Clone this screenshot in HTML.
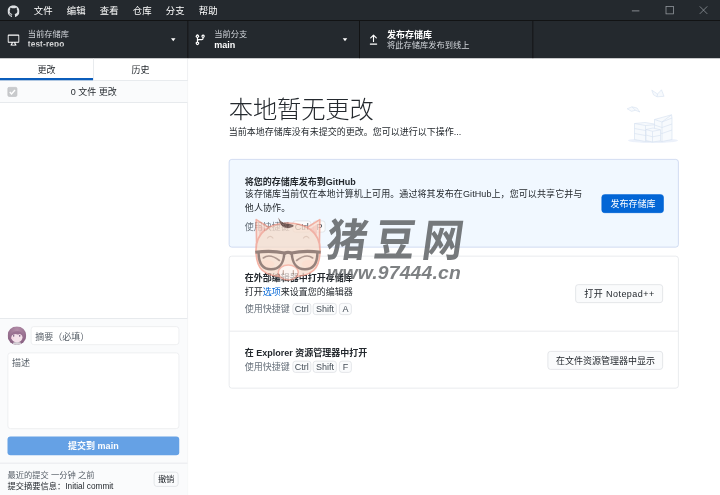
<!DOCTYPE html>
<html lang="zh-CN">
<head>
<meta charset="utf-8">
<title>GitHub Desktop</title>
<style>
html,body{margin:0;padding:0;width:720px;height:495px;overflow:hidden;background:#fff;}
*{box-sizing:border-box;}
#app{position:absolute;left:0;top:0;width:960px;height:660px;transform:scale(0.75);transform-origin:0 0;
  font-family:"Liberation Sans","Noto Sans CJK SC",sans-serif;font-size:12px;color:#24292e;background:#fff;overflow:hidden;}
/* title bar */
#titlebar{position:absolute;left:0;top:0;width:960px;height:28px;background:#24292e;border-bottom:1px solid #0c0c0c;color:#fff;}
#titlebar .logo{position:absolute;left:9.7px;top:6.6px;width:16px;height:16px;}
#titlebar .menu{position:absolute;top:0;height:27px;line-height:29px;font-size:12.5px;color:#fff;white-space:nowrap;}
#titlebar .wc{position:absolute;top:0;width:45px;height:27px;}
/* toolbar */
#toolbar{position:absolute;left:0;top:28px;width:960px;height:50px;background:#24292e;color:#fff;}
.tbtn{position:absolute;top:0;height:50px;border-right:1px solid #0c0c0c;}
.tbtn .ico{position:absolute;left:10px;top:17px;width:16px;height:16px;}
.tbtn .desc{position:absolute;left:36px;top:10px;font-size:11px;line-height:14px;color:#d1d5da;white-space:nowrap;}
.tbtn .ttl{position:absolute;left:36px;top:24px;font-size:12px;line-height:16px;font-weight:bold;color:#fff;white-space:nowrap;}
.tbtn .caret{position:absolute;right:16px;top:22.5px;width:0;height:0;border-left:3.8px solid transparent;border-right:3.8px solid transparent;border-top:4.3px solid #fff;}
/* sidebar */
#sidebar{position:absolute;left:0;top:78px;width:251px;height:582px;background:#fff;border-right:1px solid #e1e4e8;}
.tabs{position:absolute;left:0;top:0;width:250px;height:30px;border-bottom:1px solid #e1e4e8;}
.tab{position:absolute;top:0;height:29px;line-height:30px;text-align:center;font-size:12px;color:#24292e;}
.tab.sel{border-bottom:3px solid #0b5dbb;}
.chdr{position:absolute;left:0;top:30px;width:250px;height:29px;border-bottom:1px solid #e1e4e8;background:#fafbfc;}
.chdr .cb{position:absolute;left:10px;top:8px;width:13px;height:13px;border-radius:2px;background:#c9cbcd;border:1px solid #c0c2c4;}
.chdr .lbl{position:absolute;left:0;width:250px;top:0;line-height:28px;text-align:center;color:#24292e;}
/* commit form */
#commit{position:absolute;left:0;top:346px;width:250px;height:236px;border-top:1px solid #e1e4e8;background:#fafbfc;}

/* main */
#main{position:absolute;left:251px;top:78px;width:709px;height:582px;background:#fff;}
#main h1{position:absolute;left:54px;top:46.5px;margin:0;font-size:32.4px;line-height:42px;font-weight:300;font-family:"Liberation Sans","Noto Sans CJK SC",sans-serif;color:#24292e;white-space:nowrap;letter-spacing:-0.2px;}
#main .sub{position:absolute;left:54px;top:89.7px;font-size:12px;line-height:16px;color:#24292e;white-space:nowrap;}
.box{position:absolute;left:54.4px;width:600px;border:1px solid #e1e4e8;border-radius:4px;background:#fff;}
.box.primary{background:#f1f8ff;border-color:#c4d2ec;}
.box h2{position:absolute;margin:0;left:20px;font-size:12px;line-height:16px;font-weight:bold;color:#24292e;white-space:nowrap;}
.box .d{position:absolute;left:20px;font-size:12px;line-height:18px;color:#24292e;white-space:nowrap;}
.box .k{position:absolute;left:20px;font-size:12px;line-height:16px;color:#6a737d;white-space:nowrap;}
kbd{display:inline-block;font-family:inherit;font-size:12px;line-height:14px;height:16px;padding:0;text-align:center;margin-right:2.7px;border:1px solid #dcdfe3;border-radius:4px;background:#fafbfc;color:#444d56;vertical-align:baseline;}
.btn{position:absolute;height:25px;line-height:25.6px;border:1px solid #dcdfe3;border-radius:4px;background:#fafbfc;color:#24292e;font-size:12px;text-align:center;white-space:nowrap;}
.btn.blue{background:#0366d6;border-color:#0366d6;color:#fff;}
a.l{color:#0366d6;text-decoration:none;}

#commit .avatar{position:absolute;left:9.6px;top:9.6px;width:25.8px;height:25.8px;border-radius:50%;overflow:hidden;}
#commit .inp{position:absolute;border:1px solid #e9ebee;border-radius:4px;background:#fff;color:#586069;font-size:12px;}
#commit .cbtn{position:absolute;left:10px;top:157px;width:229px;height:25px;border-radius:4px;background:#0366d6;opacity:.6;color:#fff;font-weight:bold;text-align:center;line-height:25px;font-size:12px;}
#undo{position:absolute;left:0;top:192px;width:250px;height:45px;border-top:1px solid #e1e4e8;background:#fafbfc;}

#wm{position:absolute;left:0;top:0;width:720px;height:495px;pointer-events:none;}
</style>
</head>
<body>
<div id="app">
  <div id="titlebar">
    <svg class="logo" viewBox="0 0 16 16"><path fill="#dcdfe2" d="M8 0C3.58 0 0 3.58 0 8c0 3.54 2.29 6.53 5.47 7.59.4.07.55-.17.55-.38 0-.19-.01-.82-.01-1.49-2.01.37-2.53-.49-2.69-.94-.09-.23-.48-.94-.82-1.13-.28-.15-.68-.52-.01-.53.63-.01 1.08.58 1.23.82.72 1.21 1.87.87 2.33.66.07-.52.28-.87.51-1.07-1.78-.2-3.64-.89-3.64-3.95 0-.87.31-1.59.82-2.15-.08-.2-.36-1.02.08-2.12 0 0 .67-.21 2.2.82.64-.18 1.32-.27 2-.27s1.36.09 2 .27c1.53-1.04 2.2-.82 2.2-.82.44 1.1.16 1.92.08 2.12.51.56.82 1.27.82 2.15 0 3.07-1.87 3.75-3.65 3.95.29.25.54.73.54 1.48 0 1.07-.01 1.93-.01 2.2 0 .21.15.46.55.38A8.01 8.01 0 0 0 16 8c0-4.42-3.58-8-8-8z"/></svg>
    <div class="menu" style="left:45px">文件</div>
    <div class="menu" style="left:89px">编辑</div>
    <div class="menu" style="left:133px">查看</div>
    <div class="menu" style="left:177px">仓库</div>
    <div class="menu" style="left:221px">分支</div>
    <div class="menu" style="left:265px">帮助</div>
  <svg class="wc" style="left:825px" viewBox="0 0 45 27"><path d="M17.5 14.5h10" stroke="#a7abb0" stroke-width="1" fill="none"/></svg>
    <svg class="wc" style="left:870px" viewBox="0 0 45 27"><rect x="18" y="8.5" width="10" height="10" stroke="#9da2a7" stroke-width="0.95" fill="none"/></svg>
    <svg class="wc" style="left:915px" viewBox="0 0 45 27"><path d="M18 8.5l10 10M28 8.5l-10 10" stroke="#9da2a7" stroke-width="0.95" fill="none"/></svg>
  </div>
  <div id="toolbar">
    <div class="tbtn" style="left:0;width:251px">
      <svg class="ico" viewBox="0 0 16 16"><path fill="#fff" fill-rule="evenodd" d="M1.75 2.5h12.5a.25.25 0 01.25.25v7.5a.25.25 0 01-.25.25H1.75a.25.25 0 01-.25-.25v-7.5a.25.25 0 01.25-.25zM14.25 1H1.75A1.75 1.75 0 000 2.75v7.5C0 11.216.784 12 1.75 12h3.727c-.1 1.041-.52 1.872-1.292 2.757A.75.75 0 004.75 16h6.5a.75.75 0 00.565-1.243c-.772-.885-1.193-1.716-1.292-2.757h3.727A1.75 1.75 0 0016 10.25v-7.5A1.75 1.75 0 0014.25 1zM9.018 12H6.982a5.72 5.72 0 01-.765 2.5h3.566a5.72 5.72 0 01-.765-2.5z"/></svg>
      <div class="desc" style="left:37px;filter:blur(0.45px)">当前存储库</div>
      <div class="ttl" style="left:37px;top:25px;height:9px;line-height:12px;overflow:hidden;font-size:11px;filter:blur(0.8px);opacity:.8;letter-spacing:.2px">test-repo</div>
      <div class="caret"></div>
    </div>
    <div class="tbtn" style="left:251px;width:229px">
      <svg class="ico" style="left:8px" viewBox="0 0 16 16"><path fill="#fff" fill-rule="evenodd" d="M11.75 2.5a.75.75 0 100 1.5.75.75 0 000-1.5zm-2.25.75a2.25 2.25 0 113 2.122V6A2.5 2.5 0 0110 8.5H6a1 1 0 00-1 1v1.128a2.251 2.251 0 11-1.5 0V5.372a2.25 2.25 0 111.5 0v1.836A2.492 2.492 0 016 7h4a1 1 0 001-1v-.628A2.25 2.25 0 019.5 3.25zM4.25 12a.75.75 0 100 1.5.75.75 0 000-1.5zM3.5 3.25a.75.75 0 111.5 0 .75.75 0 01-1.5 0z"/></svg>
      <div class="desc" style="left:34.7px">当前分支</div>
      <div class="ttl" style="left:34.7px">main</div>
      <div class="caret"></div>
    </div>
    <div class="tbtn" style="left:480px;width:231px">
      <svg class="ico" viewBox="0 0 16 16"><path fill="#fff" fill-rule="evenodd" d="M8.53 1.22a.75.75 0 00-1.06 0L3.72 4.97a.75.75 0 001.06 1.06l2.47-2.47v6.69a.75.75 0 001.5 0V3.56l2.47 2.47a.75.75 0 101.06-1.06L8.53 1.22zM3.75 13a.75.75 0 000 1.5h8.5a.75.75 0 000-1.5h-8.5z"/></svg>
      <div class="ttl" style="top:10px">发布存储库</div>
      <div class="desc" style="top:25px">将此存储库发布到线上</div>
    </div>
  </div>
  <div id="sidebar">
    <div class="tabs">
      <div class="tab sel" style="left:0;width:124px">更改</div>
      <div class="tab" style="left:124px;width:126px;border-left:1px solid #e1e4e8">历史</div>
    </div>
    <div class="chdr"><div class="cb"><svg viewBox="0 0 13 13" width="13" height="13" style="position:absolute;left:-1px;top:-1px"><path d="M3 6.8l2.4 2.4L10 4" stroke="#fff" stroke-width="1.8" fill="none"/></svg></div><div class="lbl">0 文件 更改</div></div>
    <div id="commit">
      <div class="avatar"><svg viewBox="0 0 25 25" width="25.8" height="25.8" style="display:block"><defs><radialGradient id="hg" cx="0.5" cy="0.2" r="0.7"><stop offset="0" stop-color="#b48ea9"/><stop offset="1" stop-color="#8a6283"/></radialGradient></defs><rect width="25" height="25" fill="url(#hg)"/><ellipse cx="12.2" cy="14.6" rx="7.2" ry="6.2" fill="#f4e1ea"/><path d="M4 13 C4.500 8 9 6.500 12.500 6.500 C16 6.500 20 8 20.500 13 C19 11.500 17.500 10.300 15.500 10 C14 11 12.500 10.800 11 10 C9 10.300 6 11 4 13Z" fill="#9a7192"/><ellipse cx="8" cy="12.400" rx="0.9" ry="1.100" fill="#6f5378"/><ellipse cx="15.800" cy="12.400" rx="0.9" ry="1.100" fill="#6f5378"/><ellipse cx="6.500" cy="15.500" rx="1.800" ry="1.200" fill="#f6cfe0" opacity=".8"/><path d="M6.500 25 L7.500 21 C10 20 14.500 20 17 21 L18 25Z" fill="#d6d2d7"/></svg></div>
      <div class="inp" style="left:41px;top:10px;width:198px;height:25px;line-height:23px;padding:2px 0 0 5px;overflow:hidden">摘要（必填）</div>
      <div class="inp" style="left:10px;top:45px;width:229px;height:102px;line-height:16px;padding:5px 5px">描述</div>
      <div class="cbtn">提交到 main</div>
      <div id="undo">
        <div style="position:absolute;left:10px;top:7.5px;line-height:14px;font-size:11px;color:#586069;white-space:nowrap">最近的提交 一分钟 之前</div>
        <div style="position:absolute;left:10px;top:22.6px;line-height:14px;font-size:11px;color:#24292e;white-space:nowrap">提交摘要信息：Initial commit</div>
        <div class="btn" style="left:205px;top:11px;width:33px;height:20px;line-height:18px;font-size:11px">撤销</div>
      </div>
    </div>
  </div>
  <div id="main">
    <h1>本地暂无更改</h1>
    <div class="sub">当前本地存储库没有未提交的更改。您可以进行以下操作...</div>
    <div class="box primary" style="top:134px;height:118px">
      <h2 style="top:22px">将您的存储库发布到GitHub</h2>
      <div class="d" style="top:38.4px;line-height:17.5px;letter-spacing:.12px">该存储库当前仅在本地计算机上可用。通过将其发布在GitHub上，您可以共享它并与<br>他人协作。</div>
      <div class="k" style="top:81px">使用快捷键 <kbd style="width:25px">Ctrl</kbd><kbd style="width:17px">P</kbd></div>
      <div class="btn blue" style="left:496px;top:46px;width:83px">发布存储库</div>
    </div>
    <div class="box" style="top:263.3px;height:177px">
      <h2 style="top:20.6px">在外部编辑器中打开存储库</h2>
      <div class="d" style="top:37.8px">打开<a class="l">选项</a>来设置您的编辑器</div>
      <div class="k" style="top:62px">使用快捷键 <kbd style="width:25px">Ctrl</kbd><kbd style="width:32px">Shift</kbd><kbd style="width:17px">A</kbd></div>
      <div class="btn" style="left:461px;top:37px;width:117px;letter-spacing:.6px">打开 Notepad++</div>
      <div style="position:absolute;left:0;top:98.8px;width:598px;height:1px;background:#e1e4e8"></div>
      <h2 style="top:121.2px">在 Explorer 资源管理器中打开</h2>
      <div class="k" style="top:138.4px">使用快捷键 <kbd style="width:25px">Ctrl</kbd><kbd style="width:32px">Shift</kbd><kbd style="width:17px">F</kbd></div>
      <div class="btn" style="left:424px;top:126px;width:154px">在文件资源管理器中显示</div>
    </div>
  </div>
</div>
<svg id="wm" viewBox="0 0 720 495">
  <defs>
    <linearGradient id="fade" x1="0" y1="0" x2="0" y2="1"><stop offset="0" stop-color="#fff" stop-opacity="1"/><stop offset="0.78" stop-color="#fff" stop-opacity="1"/><stop offset="1" stop-color="#fff" stop-opacity="0"/></linearGradient>
    <mask id="pm"><rect x="250" y="210" width="80" height="70" fill="url(#fade)"/></mask>
  </defs>
  <g id="ill" fill="#f4f8fd" stroke="#c3d3ea" stroke-width="0.6" stroke-linejoin="round" opacity="0.7">
    <ellipse cx="653" cy="140.500" rx="25" ry="2.600" fill="#e4ecf9" stroke="none"/>
    <path d="M634.500 123.500 L645 122.500 L657.500 124.500 L657.500 140.500 L645.500 141.500 L634.500 139.500Z"/>
    <path d="M634.500 123.500 L645.500 125.500 L657.500 124.500 M645.500 125.500 L645.500 141.500 M634.500 128.500 L645.500 130.500 L657.500 129.500 M634.500 133.500 L645.500 135.500 L657.500 134.500" fill="none"/>
    <path d="M654.500 119.500 L671.500 114.800 L672 118 L672 139.500 L662 141.500 L654.500 139.500Z"/>
    <path d="M654.500 119.500 L662 122 L672 118 M662 122 L662 141.500 M654.500 125 L662 127.500 L672 124 M654.500 131 L662 133.500 L672 130 M662 122 L671.500 114.800" fill="none"/>
    <path d="M646 129.500 L653 128 L660.500 129.800 L660.500 140.800 L652.500 142 L646 140.500Z"/>
    <path d="M646 129.500 L652.500 131.300 L660.500 129.800 M652.500 131.300 L652.500 142 M646 135 L652.500 136.800 L660.500 135.300" fill="none"/>
    <path d="M651.800 90.200 L657.500 94 L661.500 89.800 L664 96.300 L657 96.800 L653.500 94.800Z"/>
    <path d="M657.500 94 L657 96.800" fill="none"/>
    <path d="M627.200 108.800 L632 106.800 L637 108 L639.800 112 L635.500 110.300 L631.500 111.300Z"/>
    <path d="M632 106.800 L635.500 110.300" fill="none"/>
  </g>
  <g id="pig" opacity="0.75">
    <path d="M256.6 247 L256.2 219.6 L269 227.5 Z" fill="#f9ddd0" stroke="#f29a88" stroke-width="1.6" stroke-linejoin="round"/>
    <path d="M319.4 247 L319.8 219.6 L307 227.5 Z" fill="#f9ddd0" stroke="#f29a88" stroke-width="1.6" stroke-linejoin="round"/>
    <path d="M259.3 238 L259 224.3 L265.5 228.5 Z" fill="#f6bfb2"/>
    <path d="M316.7 238 L317 224.3 L310.5 228.5 Z" fill="#f6bfb2"/>
    <path d="M256 250 C256 232 270 223 288 223 C306 223 320 232 320 250 C320 268 314 277 288 277 C262 277 256 268 256 250 Z" fill="#f6dccb" stroke="#f29a88" stroke-width="1.7"/>
    <path d="M278.3 217.6 C280.8 222.3 284 223.6 288 223.8 C291 223.9 293.2 224.8 293.8 226 C290 229.3 283.6 228.6 281 224.8 C279.6 222.6 278.8 220.3 278.3 217.6Z" fill="#5d3b33"/>
    <path d="M267.5 238 q2.7 -3.4 5.4 0" fill="none" stroke="#d9b9a6" stroke-width="1.2" stroke-linecap="round"/>
    <path d="M303.5 238 q2.7 -3.4 5.4 0" fill="none" stroke="#d9b9a6" stroke-width="1.2" stroke-linecap="round"/>
    <ellipse cx="267" cy="264" rx="7.5" ry="4" fill="#fbd3bf" opacity=".8"/>
    <ellipse cx="309" cy="264" rx="7.5" ry="4" fill="#fbd3bf" opacity=".8"/>
    <ellipse cx="288.3" cy="272.5" rx="10" ry="7.5" fill="#fdf3ee" stroke="#f2a392" stroke-width="1.5"/>
    <path d="M283.3 270.5 v3.5 M293.3 270.5 v3.5" stroke="#b08a7c" stroke-width="1.1" stroke-linecap="round"/>
    <path d="M258.6 252.5 C258.6 262 261 269.3 271 269.3 C280 269.3 284 262 284.3 252.5" fill="none" stroke="#735951" stroke-width="2.5"/>
    <path d="M317.4 252.5 C317.4 262 315 269.3 305 269.3 C296 269.3 292 262 291.7 252.5" fill="none" stroke="#735951" stroke-width="2.5"/>
    <path d="M255.3 252.2 C266 250.9 277 251.3 284.5 253 Q288 251.5 291.5 253 C299 251.3 310 250.9 320.7 252.2" fill="none" stroke="#735951" stroke-width="3.1"/>
    <path d="M284.3 254 Q288 252 291.7 254" fill="none" stroke="#735951" stroke-width="2"/>
    <path d="M263.3 258 C267 255.2 272 254.8 279.4 260.5" fill="none" stroke="#94766b" stroke-width="1.6" stroke-linecap="round"/>
    <path d="M312.7 258 C309 255.2 304 254.8 296.6 260.5" fill="none" stroke="#94766b" stroke-width="1.6" stroke-linecap="round"/>
  </g>
  <g opacity="0.84"><text x="0" y="0" font-family="'Liberation Sans','Noto Sans CJK SC',sans-serif" font-weight="700" font-size="44.5" fill="#5e6164" transform="translate(324.5 255.5) skewX(-8) scale(0.92 1)" letter-spacing="7.7">猪豆网</text></g>
  <g opacity="0.84"><text x="0" y="0" transform="translate(327.3 278.9) scale(1.1 1)" font-family="'Liberation Sans',sans-serif" font-weight="bold" font-style="italic" font-size="17.6" fill="#66696c" textLength="121.4" lengthAdjust="spacing">www.97444.cn</text></g>
</svg>
</body>
</html>
